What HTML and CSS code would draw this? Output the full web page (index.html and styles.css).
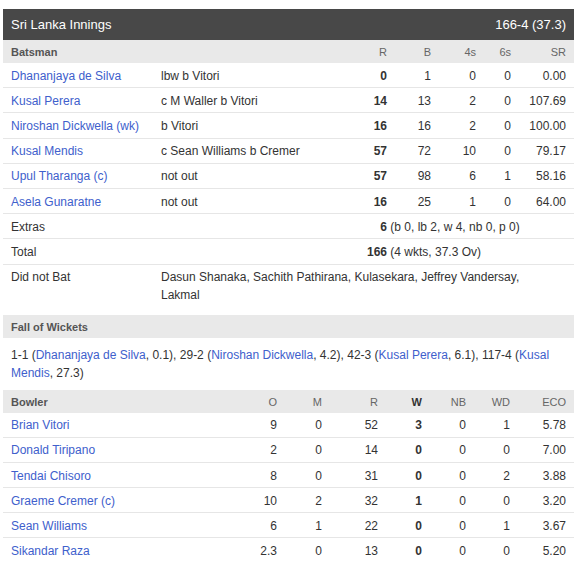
FILE: index.html
```html
<!DOCTYPE html>
<html>
<head>
<meta charset="utf-8">
<link rel="stylesheet" href="styles.css">
</head>
<body>
<div class="card">
  <div class="title-bar">
    <span>Sri Lanka Innings</span>
    <span>166-4 (37.3)</span>
  </div>

  <div class="row bat head">
    <div class="c lbl">Batsman</div>
    <div class="c"></div>
    <div class="c num">R</div>
    <div class="c num">B</div>
    <div class="c num">4s</div>
    <div class="c num">6s</div>
    <div class="c num">SR</div>
  </div>

  <div class="row bat line">
    <div class="c"><a class="link">Dhananjaya de Silva</a></div>
    <div class="c">lbw b Vitori</div>
    <div class="c num strong">0</div>
    <div class="c num">1</div>
    <div class="c num">0</div>
    <div class="c num">0</div>
    <div class="c num">0.00</div>
  </div>
  <div class="row bat line">
    <div class="c"><a class="link">Kusal Perera</a></div>
    <div class="c">c M Waller b Vitori</div>
    <div class="c num strong">14</div>
    <div class="c num">13</div>
    <div class="c num">2</div>
    <div class="c num">0</div>
    <div class="c num">107.69</div>
  </div>
  <div class="row bat line">
    <div class="c"><a class="link">Niroshan Dickwella (wk)</a></div>
    <div class="c">b Vitori</div>
    <div class="c num strong">16</div>
    <div class="c num">16</div>
    <div class="c num">2</div>
    <div class="c num">0</div>
    <div class="c num">100.00</div>
  </div>
  <div class="row bat line">
    <div class="c"><a class="link">Kusal Mendis</a></div>
    <div class="c">c Sean Williams b Cremer</div>
    <div class="c num strong">57</div>
    <div class="c num">72</div>
    <div class="c num">10</div>
    <div class="c num">0</div>
    <div class="c num">79.17</div>
  </div>
  <div class="row bat line">
    <div class="c"><a class="link">Upul Tharanga (c)</a></div>
    <div class="c">not out</div>
    <div class="c num strong">57</div>
    <div class="c num">98</div>
    <div class="c num">6</div>
    <div class="c num">1</div>
    <div class="c num">58.16</div>
  </div>
  <div class="row bat line">
    <div class="c"><a class="link">Asela Gunaratne</a></div>
    <div class="c">not out</div>
    <div class="c num strong">16</div>
    <div class="c num">25</div>
    <div class="c num">1</div>
    <div class="c num">0</div>
    <div class="c num">64.00</div>
  </div>

  <div class="row bat line">
    <div class="c">Extras</div>
    <div class="c"></div>
    <div class="c span-rest"><span class="big-num">6</span> (b 0, lb 2, w 4, nb 0, p 0)</div>
  </div>
  <div class="row bat line">
    <div class="c">Total</div>
    <div class="c"></div>
    <div class="c span-rest"><span class="big-num">166</span> (4 wkts, 37.3 Ov)</div>
  </div>
  <div class="row bat dnb">
    <div class="c">Did not Bat</div>
    <div class="c span-wide"><span class="dnb-text">Dasun Shanaka, Sachith Pathirana, Kulasekara, Jeffrey Vandersay, Lakmal</span></div>
  </div>

  <div class="section-head">Fall of Wickets</div>
  <p class="fow">1-1 (<a class="link">Dhananjaya de Silva</a>, 0.1), 29-2 (<a class="link">Niroshan Dickwella</a>, 4.2), 42-3 (<a class="link">Kusal Perera</a>, 6.1), 117-4 (<a class="link">Kusal Mendis</a>, 27.3)</p>

  <div class="row bowl head">
    <div class="c lbl">Bowler</div>
    <div class="c num">O</div>
    <div class="c num">M</div>
    <div class="c num">R</div>
    <div class="c num lbl-dark">W</div>
    <div class="c num">NB</div>
    <div class="c num">WD</div>
    <div class="c num">ECO</div>
  </div>
  <div class="row bowl line">
    <div class="c"><a class="link">Brian Vitori</a></div>
    <div class="c num">9</div>
    <div class="c num">0</div>
    <div class="c num">52</div>
    <div class="c num strong">3</div>
    <div class="c num">0</div>
    <div class="c num">1</div>
    <div class="c num">5.78</div>
  </div>
  <div class="row bowl line">
    <div class="c"><a class="link">Donald Tiripano</a></div>
    <div class="c num">2</div>
    <div class="c num">0</div>
    <div class="c num">14</div>
    <div class="c num strong">0</div>
    <div class="c num">0</div>
    <div class="c num">0</div>
    <div class="c num">7.00</div>
  </div>
  <div class="row bowl line">
    <div class="c"><a class="link">Tendai Chisoro</a></div>
    <div class="c num">8</div>
    <div class="c num">0</div>
    <div class="c num">31</div>
    <div class="c num strong">0</div>
    <div class="c num">0</div>
    <div class="c num">2</div>
    <div class="c num">3.88</div>
  </div>
  <div class="row bowl line">
    <div class="c"><a class="link">Graeme Cremer (c)</a></div>
    <div class="c num">10</div>
    <div class="c num">2</div>
    <div class="c num">32</div>
    <div class="c num strong">1</div>
    <div class="c num">0</div>
    <div class="c num">0</div>
    <div class="c num">3.20</div>
  </div>
  <div class="row bowl line">
    <div class="c"><a class="link">Sean Williams</a></div>
    <div class="c num">6</div>
    <div class="c num">1</div>
    <div class="c num">22</div>
    <div class="c num strong">0</div>
    <div class="c num">0</div>
    <div class="c num">1</div>
    <div class="c num">3.67</div>
  </div>
  <div class="row bowl">
    <div class="c"><a class="link">Sikandar Raza</a></div>
    <div class="c num">2.3</div>
    <div class="c num">0</div>
    <div class="c num">13</div>
    <div class="c num strong">0</div>
    <div class="c num">0</div>
    <div class="c num">0</div>
    <div class="c num">5.20</div>
  </div>
</div>
</body>
</html>
```

FILE: styles.css
```css
html, body {
  background: #ffffff;
}
body {
  margin: 9px 9px 0 3px;
  font-family: "Liberation Sans", Arial, sans-serif;
  font-size: 12px;
  color: #333333;
}
.card {
  width: 571px;
}
.title-bar {
  height: 31px;
  box-sizing: border-box;
  background: #484848;
  color: #ffffff;
  font-size: 13px;
  display: flex;
  justify-content: space-between;
  align-items: center;
  padding: 0 8px 1px;
}
.row {
  display: grid;
  align-items: center;
}
.bat {
  grid-template-columns: 150px 187px 55px 44px 45px 35px 55px;
}
.bowl {
  grid-template-columns: 232px 50px 45px 56px 44px 44px 44px 56px;
}
.c {
  padding: 3.7px 8px 2.5px;
  line-height: 18px;
  white-space: nowrap;
}
.num {
  text-align: right;
}
.strong {
  font-weight: bold;
}
.line {
  border-bottom: 1px solid #e6e6e6;
}
.head {
  background: #e9e9e9;
  height: 23px;
  color: #666666;
  font-size: 11px;
}
.head .c {
  padding-top: 1px;
  padding-bottom: 0;
  line-height: 22px;
}
.lbl {
  font-weight: bold;
  color: #555555;
}
.lbl-dark {
  font-weight: bold;
  color: #333333;
}
.link {
  color: #4060cc;
  text-decoration: none;
}
.span-rest {
  grid-column: 3 / 8;
  padding-left: 0;
}
.big-num {
  display: inline-block;
  width: 47px;
  text-align: right;
  font-weight: bold;
}
.span-wide {
  grid-column: 2 / 8;
  white-space: normal;
}
.dnb {
  align-items: start;
  margin-bottom: 7.5px;
}
.dnb .c {
  padding-top: 3.5px;
  padding-bottom: 3px;
}
.dnb-text {
  display: block;
  max-width: 385px;
}
.section-head {
  background: #e9e9e9;
  height: 23px;
  box-sizing: border-box;
  line-height: 22px;
  padding: 1px 8px 0;
  font-size: 11px;
  font-weight: bold;
  color: #555555;
}
.fow {
  margin: 0;
  padding: 8px 8px 8px;
  line-height: 18px;
}
```
